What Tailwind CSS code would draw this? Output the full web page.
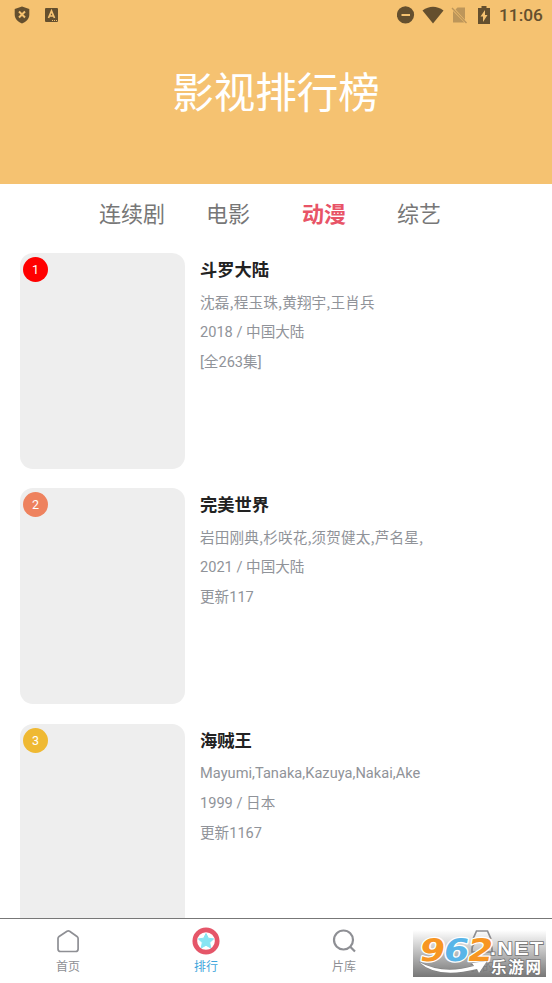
<!DOCTYPE html>
<html lang="zh-CN">
<head>
<meta charset="utf-8">
<title>影视排行榜</title>
<script src="https://cdn.jsdelivr.net/npm/@tailwindcss/browser@4"></script>
</head>
<body class="w-[552px] h-[983px] overflow-hidden bg-white font-['Roboto','Noto_Sans_CJK_SC',sans-serif]">
<div class="relative flex flex-col h-[983px]">
  <header class="h-[184px] shrink-0 bg-[#f5c271]">
    <div class="h-[30px] flex items-center justify-between pl-[14px] pr-[10px] text-[#644f2e]">
      <div class="flex items-center gap-[15px]">
        <svg class="w-4 h-[18px]" viewBox="0 0 16 18"><path fill="currentColor" d="M8 .5 15.300 3v5.500c0 4-3 7.500-7.300 9-4.300-1.500-7.300-5-7.300-9V3z"/><path d="m5 5.500 6 6m0-6-6 6" stroke="#f5c271" stroke-width="2"/></svg>
        <svg class="w-[13px] h-[14px]" viewBox="0 0 13 14"><rect width="13" height="14" rx="1" fill="currentColor"/><path d="M3.500 10 6.500 3l3 7M4.500 8h4" fill="none" stroke="#f5c271" stroke-width="1.700"/><path d="M7 12.500h5" stroke="#f5c271" stroke-dasharray="1 1"/></svg>
      </div>
      <div class="flex items-center">
        <svg class="w-[18px] h-[18px]" viewBox="0 0 18 18"><circle cx="8.500" cy="8.800" r="8.600" fill="currentColor"/><path d="M4.500 9h8.500" stroke="#f5c271" stroke-width="2"/></svg>
        <svg class="w-[22px] h-[18px] ml-[7px]" viewBox="0 0 22 18"><path fill="currentColor" d="M.5 4.500Q11-3 21.500 4.500L11 17.500z"/></svg>
        <svg class="w-[17px] h-[18px] ml-[7px] text-[#bd965a]" viewBox="0 0 17 18"><path fill="currentColor" d="M6.500 1.500H14V14L4.500 3.500zM2 5 13.500 16.500H2z"/><path d="m1 2 14.500 15" stroke="currentColor" stroke-width="1.400"/></svg>
        <svg class="w-[12px] h-[18px] ml-[10px]" viewBox="0 0 12 18"><path fill="currentColor" d="M3.500 0h5v2H12v16H0V2h3.500z"/><path fill="#f5c271" d="M7 4 2.500 10.500H5V16l4.500-7H7z"/></svg>
        <span class="ml-[9px] w-[43px] text-[17.300px] leading-[30px] font-medium whitespace-nowrap">11:06</span>
      </div>
    </div>
    <h1 class="mt-[34px] text-center text-[41.500px] leading-[60px] text-white">影视排行榜</h1>
  </header>
  <nav class="h-[69px] shrink-0 flex pl-[99px] text-[22px] leading-[62px] text-[#777]">
    <span class="w-[107px]">连续剧</span><span class="w-[96px]">电影</span><span class="w-[95px] font-bold text-[#e85467]">动漫</span><span>综艺</span>
  </nav>
  <main class="h-[665px] shrink-0 overflow-hidden flex flex-col gap-[19.400px] px-5 text-[14.600px] text-[#909399]">
    <article class="flex h-[216px] shrink-0 gap-[15px]">
      <div class="w-[165px] h-[216px] rounded-[13px] bg-[#eee] pt-[4px] pl-[3px]"><div class="size-[25px] rounded-full bg-[#f00] text-white text-[12.500px] leading-[25px] text-center">1</div></div>
      <div class="leading-[30px]"><h2 class="text-[17.300px] leading-[34px] font-bold text-[#222]">斗罗大陆</h2><p class="font-['Noto_Sans_CJK_SC',sans-serif] tracking-[0.150px]">沈磊,程玉珠,黄翔宇,王肖兵</p><p>2018 / 中国大陆</p><p>[全263集]</p></div>
    </article>
    <article class="flex h-[216px] shrink-0 gap-[15px]">
      <div class="w-[165px] h-[216px] rounded-[13px] bg-[#eee] pt-[4px] pl-[3px]"><div class="size-[25px] rounded-full bg-[#ee825e] text-white text-[12.500px] leading-[25px] text-center">2</div></div>
      <div class="leading-[30px]"><h2 class="text-[17.300px] leading-[34px] font-bold text-[#222]">完美世界</h2><p class="font-['Noto_Sans_CJK_SC',sans-serif] tracking-[0.150px]">岩田刚典,杉咲花,须贺健太,芦名星,</p><p>2021 / 中国大陆</p><p>更新117</p></div>
    </article>
    <article class="flex h-[216px] shrink-0 gap-[15px]">
      <div class="w-[165px] h-[216px] rounded-[13px] bg-[#eee] pt-[4px] pl-[3px]"><div class="size-[25px] rounded-full bg-[#efb933] text-white text-[12.500px] leading-[25px] text-center">3</div></div>
      <div class="leading-[30px]"><h2 class="text-[17.300px] leading-[34px] font-bold text-[#222]">海贼王</h2><p class="tracking-[0.030px]">Mayumi,Tanaka,Kazuya,Nakai,Ake</p><p>1999 / 日本</p><p>更新1167</p></div>
    </article>
  </main>
  <footer class="h-[65px] shrink-0 border-t border-[#777] bg-white grid grid-cols-[136px_140px_136px_140px] text-[12px] leading-[18px] text-[#8e8f94]">
    <div class="flex flex-col items-center pt-[8px]"><svg class="size-7" viewBox="0 0 28 28" fill="none" stroke="currentColor" stroke-width="1.700"><path d="M4 11.500c0-1 .4-1.500 1.100-2L13 4.300q1.300-.8 2.600 0l7.400 5.200c.7.500 1.100 1 1.100 2v10.500q0 2.500-2.500 2.500H6.500q-2.500 0-2.500-2.500z"/></svg><span class="mt-[3px]">首页</span></div>
    <div class="flex flex-col items-center pt-[8px] text-[#3ea5db]"><svg class="size-7" viewBox="0 0 28 28"><circle cx="14" cy="14" r="11.200" fill="white" stroke="#e55669" stroke-width="4.700"/><path d="m14 6.500 2.300 4.700 5.300.7-3.900 3.700 1 5.300-4.700-2.600-4.700 2.600 1-5.300-3.900-3.700 5.300-.7z" fill="#87e5f3" stroke="#87e5f3" stroke-linejoin="round"/></svg><span class="mt-[3px]">排行</span></div>
    <div class="flex flex-col items-center pt-[8px]"><svg class="size-7" viewBox="0 0 28 28" fill="none" stroke="currentColor" stroke-width="2.200"><circle cx="13.500" cy="13" r="9.500"/><path d="m20 19.500 5 5"/></svg><span class="mt-[3px]">片库</span></div>
    <div class="flex flex-col items-center pt-[8px]"><svg class="size-7" viewBox="0 0 28 28" fill="none" stroke="currentColor" stroke-width="1.700"><path d="M5 12 8.500 4h11l3.500 8M4 22q0-7 10-7t10 7v3H4z"/></svg><span class="mt-[3px]">我的</span></div>
  </footer>
  <svg class="absolute left-[413px] top-[930px] w-[133px] h-[47px] overflow-visible" viewBox="0 0 133 47" font-family="'Liberation Sans','Noto Sans CJK SC',sans-serif" font-weight="700">
    <defs><linearGradient id="shade" x2="0" y2="1"><stop stop-color="#777" stop-opacity="0"/><stop offset="1" stop-color="#777"/></linearGradient></defs>
    <rect width="133" height="47" fill="url(#shade)"/>
    <g font-size="31" stroke="white" stroke-width="2.500" stroke-linejoin="round" paint-order="stroke" font-family="'DejaVu Sans','Liberation Sans',sans-serif">
      <text transform="translate(5 31) skewX(-10) scale(1.180 1)" fill="#f79623">9</text><text transform="translate(29 31) skewX(-10) scale(1.180 1)" fill="#59b5e8">6</text><text transform="translate(53 31) skewX(-10) scale(1.180 1)" fill="#f79623">2</text>
    </g>
    <g fill="white" stroke="#777" stroke-width="1.600" paint-order="stroke">
      <text transform="translate(77 25) scale(1.130 1)" font-size="19" textLength="47" lengthAdjust="spacing">.NET</text>
      <text x="78" y="43" font-size="15.500" textLength="50" lengthAdjust="spacing">乐游网</text>
      <path stroke-width=".5" d="M6 32q24 13 55 4l-2-3 15-2-8 12-2-4Q24 49 6 32z"/>
    </g>
  </svg>
</div>
</body>
</html>
